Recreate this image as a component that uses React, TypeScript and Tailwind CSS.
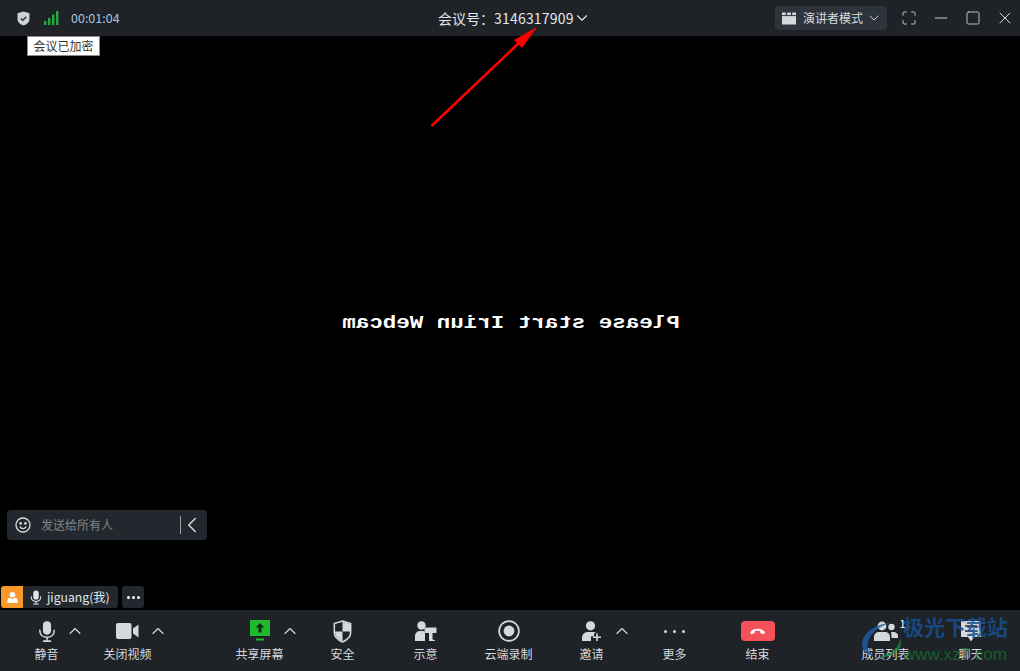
import { ChevronDown, ChevronLeft, ChevronUp, Maximize, Minus, Square, X } from "lucide-react";
import type { ReactNode } from "react";

const cjk = "font-['Noto_Sans_CJK_SC','Noto_Sans',sans-serif]";

function MicIcon({ className }: { className?: string }) {
	return (
		<svg viewBox="0 0 20 24" className={className} fill="none">
			<rect x="5.5" y="0.5" width="9" height="15" rx="4.5" fill="currentColor" />
			<path d="M2 10.5c0 5 3.5 8 8 8s8-3 8-8" stroke="currentColor" strokeWidth="1.7" strokeLinecap="round" />
			<path d="M10 18.5v3.5M5.5 22.7h9" stroke="currentColor" strokeWidth="1.7" />
		</svg>
	);
}

function ShieldIcon() {
	return (
		<svg viewBox="0 0 20 24" className="h-[23px] w-[19px]">
			<path d="M10 1 18.6 3.6V13c0 4.6-3.6 7.8-8.6 10C5 20.8 1.4 17.6 1.4 13V3.6Z" fill="#1f2328" stroke="#d5d9de" strokeWidth="1.6" />
			<path d="M10 1.8 18 4.2V12H10ZM10 12v10.2C5.8 20.2 2.2 17.2 2.2 12.8V12Z" fill="#d5d9de" />
		</svg>
	);
}

function ToolbarItem({
	label,
	icon,
	caret,
	caretClassName = "left-[62px]",
	className = "",
}: {
	label: string;
	icon: ReactNode;
	caret?: boolean;
	caretClassName?: string;
	className?: string;
}) {
	return (
		<div className={`relative flex w-[83px] shrink-0 flex-col items-center ${className}`}>
			<div className="flex h-[26px] items-center justify-center text-[#d5d9de]">{icon}</div>
			<span className="mt-[2px] text-[12px] leading-[16px] whitespace-nowrap text-[#d5d9de]">{label}</span>
			{caret ? <ChevronUp className={`absolute top-[3px] size-[20px] text-[#d5d9de] ${caretClassName}`} strokeWidth={1.4} /> : null}
		</div>
	);
}

function WindowButton({ children }: { children: ReactNode }) {
	return <div className="flex h-9 w-8 items-center justify-center text-[#d5d9de]">{children}</div>;
}

export default function App() {
	return (
		<div className={`flex h-[671px] w-[1020px] flex-col overflow-hidden bg-black ${cjk}`}>
			{/* top bar */}
			<div className="relative flex h-9 shrink-0 items-center bg-[#1f2328] pl-[17px]">
				<svg viewBox="0 0 14 16" className="h-[15px] w-[13px]">
					<path d="M7 .5 13.4 2.4V9c0 3-2.6 5-6.4 6.6C3.2 14 .6 12 .6 9V2.4Z" fill="#cfd3d8" />
					<path d="M4.2 8 6.2 10 10 6.2" fill="none" stroke="#2a2e33" strokeWidth="1.5" />
				</svg>
				<svg viewBox="0 0 15 14" className="ml-[14px] h-[14px] w-[15px]" fill="#27a83c">
					<rect x="0" y="10" width="2.4" height="4" />
					<rect x="4" y="7" width="2.4" height="7" />
					<rect x="8" y="3.5" width="2.4" height="10.5" />
					<rect x="12" y="0" width="2.4" height="14" />
				</svg>
				<span className="ml-[12px] text-[12.5px] text-[#a9c4dc]">00:01:04</span>

				<div className="absolute top-0 left-[438px] flex h-9 items-center text-[#e4e7ea]">
					<span className="text-[14px] whitespace-nowrap">
						会议号：<span className="tracking-[0.2px]">3146317909</span>
					</span>
					<ChevronDown className="-ml-[1px] size-[18px]" strokeWidth={1.5} />
				</div>

				<div className="ml-auto flex h-6 w-[112px] items-center rounded-[3px] bg-[#2d343c] pl-[7px] text-[#d5d9de]">
					<svg viewBox="0 0 14 12" className="h-[13px] w-[14px]" fill="currentColor">
						<rect x="0" y="0" width="3.8" height="2.6" />
						<rect x="5.1" y="0" width="3.8" height="2.6" />
						<rect x="10.2" y="0" width="3.8" height="2.6" />
						<rect x="0" y="3.6" width="14" height="8.4" />
					</svg>
					<span className="ml-[7px] text-[12px] whitespace-nowrap">演讲者模式</span>
					<ChevronDown className="ml-[3px] size-[16px]" strokeWidth={1.4} />
				</div>
				<div className="-mr-[1px] ml-[6px] flex">
					<WindowButton>
						<Maximize className="size-[16px]" strokeWidth={1.4} />
					</WindowButton>
					<WindowButton>
						<Minus className="size-[20px]" strokeWidth={1.1} />
					</WindowButton>
					<WindowButton>
						<Square className="size-[16px]" strokeWidth={1.3} />
					</WindowButton>
					<WindowButton>
						<X className="size-[20px]" strokeWidth={1.2} />
					</WindowButton>
				</div>
			</div>

			{/* meeting area */}
			<div className="relative flex min-h-0 flex-1 flex-col items-start justify-end">
				<div className="absolute top-0 left-[27px] border border-[#8a8a8a] bg-white px-[5.5px] text-[12px] leading-[18px] text-[#333]">
					会议已加密
				</div>

				<svg viewBox="0 0 1020 140" className="absolute top-[-36px] left-0 h-[140px] w-[1020px]">
					<path d="M431.5 126 521 41" stroke="#ff0000" strokeWidth="2.6" fill="none" />
					<path d="M537 27 514 40 522 48Z" fill="#ff0000" />
				</svg>

				<div className="absolute top-[278px] left-0 flex w-full justify-center pl-[2px]">
					<span className="font-['Liberation_Mono',monospace] text-[18px] leading-[18px] font-bold whitespace-nowrap text-white [transform:scaleX(-1.25)]">
						Please start Iriun Webcam
					</span>
				</div>

				<div className="mb-[46px] ml-[7px] flex h-[30px] w-[200px] items-center rounded-[4px] bg-[#23282e] pl-[8px] text-[#d5d9de]">
					<svg viewBox="0 0 16 16" className="size-[16px]" fill="none" stroke="currentColor" strokeWidth="1.3">
						<circle cx="8" cy="8" r="7" />
						<circle cx="5.6" cy="6.4" r=".7" fill="currentColor" />
						<circle cx="10.4" cy="6.4" r=".7" fill="currentColor" />
						<path d="M4.8 9.6c.8 1.4 1.9 2 3.2 2s2.4-.6 3.2-2" />
					</svg>
					<span className="ml-[10px] text-[12px] text-[#7f858c]">发送给所有人</span>
					<div className="ml-auto h-[18px] w-px bg-[#9aa0a6]" />
					<ChevronLeft className="mr-[2px] -ml-[2px] size-[26px]" strokeWidth={1.4} />
				</div>

				<div className="mb-[2px] ml-[1px] flex h-[22px] items-center">
					<div className="flex h-[22px] w-[22px] items-center justify-center rounded-l-[3px] bg-[#f79a2a]">
						<svg viewBox="0 0 14 14" className="size-[13px]" fill="#fff">
							<circle cx="7" cy="4" r="3" />
							<path d="M1.5 13V10c0-1.6 1.4-2.6 3-2.6L7 9l2.5-1.6c1.6 0 3 1 3 2.6v3Z" />
						</svg>
					</div>
					<div className="flex h-[22px] w-[95px] items-center rounded-r-[3px] bg-[#23282e] pl-[7px] text-[#e4e7ea]">
						<MicIcon className="h-[15px] w-[12px]" />
						<span className="ml-[5px] text-[12.2px] whitespace-nowrap">jiguang(我)</span>
					</div>
					<div className="ml-[4px] flex h-[22px] w-[22px] items-center justify-center gap-[2px] rounded-[3px] bg-[#23282e]">
						<span className="size-[3px] rounded-full bg-white" />
						<span className="size-[3px] rounded-full bg-white" />
						<span className="size-[3px] rounded-full bg-white" />
					</div>
				</div>
			</div>

			{/* bottom toolbar */}
			<div className="relative flex h-[61px] shrink-0 bg-[#1f2328] pt-[8px] pl-[5px]">
				<ToolbarItem label="静音" caret caretClassName="left-[60px]" icon={<MicIcon className="h-[23px] w-[18px]" />} />
				<ToolbarItem
					label="关闭视频"
					caret
					className="-ml-[2px]"
					icon={
						<svg viewBox="0 0 23 16" className="h-[16px] w-[23px]" fill="currentColor">
							<rect x="0" y="0" width="15.5" height="16" rx="2" />
							<path d="M17 5.5 22.5 1.5V14.5L17 10.5Z" />
						</svg>
					}
				/>
				<div className="w-[49px] shrink-0" />
				<ToolbarItem
					label="共享屏幕"
					caret
					icon={
						<svg viewBox="0 0 20 22" className="h-[22px] w-[20px]">
							<rect x="0" y="0" width="20" height="16" fill="#22b92f" />
							<path d="M10 3 14.5 7.5H11.6V12.6H8.4V7.5H5.5Z" fill="#10331a" />
							<rect x="6" y="18.5" width="8" height="2" fill="#22b92f" />
						</svg>
					}
				/>
				<ToolbarItem label="安全" icon={<ShieldIcon />} />
				<ToolbarItem
					label="示意"
					icon={
						<svg viewBox="0 0 22 20" className="h-[20px] w-[22px]" fill="currentColor">
							<circle cx="6.5" cy="4.5" r="4.2" />
							<path d="M0 20v-5c0-3 2.4-5 5-5h3c1.3 0 2 1 2 2.4V20Z" />
							<path d="M9.5 6.5H21.5V12H17.5V17.5C17.5 18.8 18.4 19.2 20 19.2V20H14V12H9.5Z" />
						</svg>
					}
				/>
				<ToolbarItem
					label="云端录制"
					icon={
						<svg viewBox="0 0 22 22" className="size-[22px]">
							<circle cx="11" cy="11" r="9.9" fill="none" stroke="currentColor" strokeWidth="1.7" />
							<circle cx="11" cy="11" r="5.4" fill="currentColor" />
						</svg>
					}
				/>
				<ToolbarItem
					label="邀请"
					caret
					icon={
						<svg viewBox="0 0 20 20" className="size-[20px]" fill="currentColor">
							<circle cx="8.5" cy="4.8" r="4.6" />
							<path d="M0 20v-3c0-4 3-6 6-6h5c1.5 0 2.5.5 3 1.2H12v3H9V20Z" />
							<path d="M14.2 12.5h1.6v3h3.2v1.6h-3.2v2.9h-1.6v-2.9H11v-1.6h3.2Z" />
						</svg>
					}
				/>
				<ToolbarItem
					label="更多"
					icon={
						<div className="flex gap-[6px]">
							<span className="size-[3px] rounded-full bg-[#d5d9de]" />
							<span className="size-[3px] rounded-full bg-[#d5d9de]" />
							<span className="size-[3px] rounded-full bg-[#d5d9de]" />
						</div>
					}
				/>
				<ToolbarItem
					label="结束"
					icon={
						<div className="flex h-5 w-[34px] items-center justify-center rounded-[4px] bg-[#f4515a]">
							<svg viewBox="0 0 16 7" className="h-[7px] w-[15px]" fill="#fff">
								<path d="M0 4.5C2 1.5 5 .5 8 .5s6 1 8 4L14.5 6.5 11 5V3.2C9 2.7 7 2.7 5 3.2V5L1.5 6.5Z" />
							</svg>
						</div>
					}
				/>
				<div className="w-[45px] shrink-0" />
				<ToolbarItem
					label="成员列表"
					icon={
						<div className="relative">
							<svg viewBox="0 0 24 20" className="h-[20px] w-[24px]" fill="currentColor">
								<circle cx="8" cy="5" r="4.4" />
								<path d="M0 20v-4c0-3 2.4-5 5-5h6c2.6 0 5 2 5 5v4Z" />
								<circle cx="17.5" cy="6" r="3.2" />
								<path d="M17 11h2.5c2.4 0 4.5 1.6 4.5 4v2h-6.4c0-2.6-.2-4.4-.6-6Z" />
							</svg>
							<span className="absolute -top-[5px] -right-[8px] text-[11px] leading-[14px] text-white">1</span>
						</div>
					}
				/>
				<ToolbarItem
					label="聊天"
					className="ml-[2px]"
					icon={
						<svg viewBox="0 0 20 21" className="h-[21px] w-[20px]" fill="currentColor">
							<path d="M0 0H20V16H13L10 20.5 7 16H0Z" />
							<path d="M4 5H16M4 10H12" stroke="#1f2328" strokeWidth="1.6" />
						</svg>
					}
				/>

				{/* watermark */}
				<div className="absolute top-0 left-[858px] h-[61px] w-[162px]">
					<svg viewBox="0 0 44 40" className="absolute top-[11px] left-[2px] h-[38px] w-[42px]" fill="none">
						<path d="M32 2C16 3 3 12 2 24c0 8 6 12 14 13-6-3-9-7-8-13C9 14 19 6 32 2Z" fill="#1d5fa8" fillOpacity="0.8" />
						<path d="M42 18c0 10-9 17-22 20 9 1 18-3 22-10 1-3 1-7 0-10Z" fill="#1c8f3a" fillOpacity="0.8" />
					</svg>
					<span className="absolute top-0 left-[45px] text-[21px] leading-[32px] font-bold whitespace-nowrap text-[#17508f]/85">
						极光下载站
					</span>
					<span className="absolute top-[35px] left-[45px] font-['Liberation_Sans',sans-serif] text-[17px] leading-[20px] whitespace-nowrap text-[#11702e]/80">
						www.xz7.com
					</span>
				</div>
			</div>
		</div>
	);
}
